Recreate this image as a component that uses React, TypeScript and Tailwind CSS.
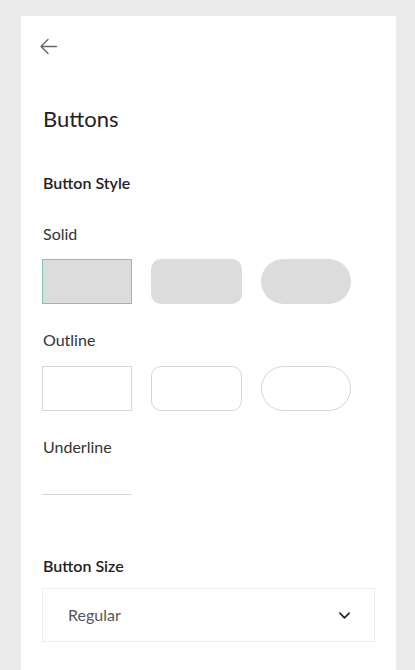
import React from "react";

export default function App() {
  const font = { fontFamily: "Lato, 'Noto Sans', sans-serif" };
  return (
    <div className="min-h-[670px] bg-[#ebebeb] pt-[16px] pl-[21px]" style={font}>
      <div className="w-[375px] min-h-[654px] bg-white px-[21px] pt-[22px] pb-6 text-[#2b2b2b]">
        <button className="-ml-[2px] block h-[17px] w-[18px] text-[#666]" aria-label="Back">
          <svg viewBox="0 0 18 17" width="18" height="17" fill="none" stroke="currentColor" strokeWidth="1.4" strokeLinecap="round" strokeLinejoin="round">
            <path d="M16.5 8.5H1M8 1.5L1 8.5L8 15.5" />
          </svg>
        </button>
        <h1 className="mt-[50px] text-[22px] leading-[28px] text-[#222] pl-[1px]">Buttons</h1>
        <h2 className="mt-[40px] text-[16px] leading-[20px] font-semibold text-[#222] pl-[1px]">Button Style</h2>

        <div className="mt-[31px] text-[16px] leading-[20px] text-[#333] pl-[1px]">Solid</div>
        <div className="mt-[15px] flex gap-[19px]">
          <div className="h-[45px] w-[90px] bg-[#7cc8a7] p-px">
            <div className="h-full w-full bg-[#dcdcdc]" />
          </div>
          <div className="h-[45px] w-[91px] bg-[#dcdcdc] rounded-[10px]" />
          <div className="h-[45px] w-[90px] bg-[#dcdcdc] rounded-full" />
        </div>

        <div className="mt-[26px] text-[16px] leading-[20px] text-[#333] pl-[1px]">Outline</div>
        <div className="mt-[16px] flex gap-[19px]">
          <div className="h-[45px] w-[90px] bg-white border border-[#d6d6d6]" />
          <div className="h-[45px] w-[91px] bg-white border border-[#d6d6d6] rounded-[10px]" />
          <div className="h-[45px] w-[90px] bg-white border border-[#d6d6d6] rounded-full" />
        </div>

        <div className="mt-[26px] text-[16px] leading-[20px] text-[#333] pl-[1px]">Underline</div>
        <div className="mt-[37px] h-px w-[90px] bg-[#d6d6d6]" />

        <h2 className="mt-[61px] text-[16px] leading-[20px] font-semibold text-[#222] pl-[1px]">Button Size</h2>
        <div className="mt-[12px] flex h-[54px] w-[333px] items-center justify-between border border-[#ececec] pl-[25px] pr-[24px]">
          <span className="text-[16px] text-[#555]">Regular</span>
          <svg viewBox="0 0 12 7" width="11" height="7" fill="none" stroke="#222" strokeWidth="1.8" strokeLinecap="round" strokeLinejoin="round">
            <path d="M1 1L6 6L11 1" />
          </svg>
        </div>
      </div>
    </div>
  );
}
